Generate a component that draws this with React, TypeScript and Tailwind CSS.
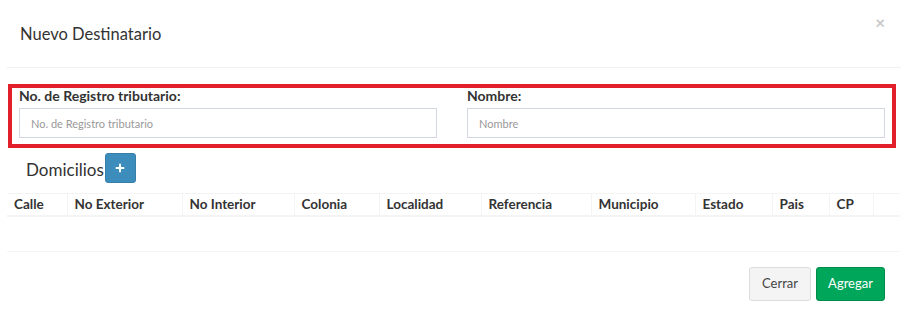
import { Plus } from "lucide-react"

const columns = [
  { label: "Calle", w: "w-[60px]" },
  { label: "No Exterior", w: "w-[115px]" },
  { label: "No Interior", w: "w-[112px]" },
  { label: "Colonia", w: "w-[85px]" },
  { label: "Localidad", w: "w-[102px]" },
  { label: "Referencia", w: "w-[110px]" },
  { label: "Municipio", w: "w-[104px]" },
  { label: "Estado", w: "w-[77px]" },
  { label: "Pais", w: "w-[57px]" },
  { label: "CP", w: "w-[44px]" },
  { label: "", w: "w-[27px]" },
]

export default function App() {
  return (
    <div className="w-[908px] h-[316px] bg-white font-['Lato',sans-serif] text-[#333]">
      <div className="relative flex items-center h-[68px] mx-[7px] px-[13px] border-b border-[#f0f0f0]">
        <h4 className="text-[16.5px] leading-none pt-[1px]">Nuevo Destinatario</h4>
        <button className="absolute right-[16px] top-[14px] text-[#c8c8c8] text-[17px] font-bold leading-none">×</button>
      </div>

      <div className="mt-[16px] ml-[8px] w-[888px] h-[64px] border-4 border-[#e2202c] grid grid-cols-2 gap-[30px] pl-[7px] pr-[7px] pt-[1px]">
        <div className="flex flex-col">
          <label className="text-[14px] font-bold leading-[14px] mb-[5px]">No. de Registro tributario:</label>
          <input
            placeholder="No. de Registro tributario"
            className="h-[30px] w-[418px] border border-[#d2d6de] px-[11px] text-[11px] placeholder:text-[#999] outline-none"
          />
        </div>
        <div className="flex flex-col">
          <label className="text-[14px] font-bold leading-[14px] mb-[5px]">Nombre:</label>
          <input
            placeholder="Nombre"
            className="h-[30px] w-[418px] border border-[#d2d6de] px-[11px] text-[11px] placeholder:text-[#999] outline-none"
          />
        </div>
      </div>

      <div className="flex items-center mt-[5px] ml-[26px] h-[30px]">
        <span className="text-[17px] leading-none pt-[3px]">Domicilios</span>
        <button className="ml-[1px] w-[31px] h-[30px] bg-[#3c8dbc] border border-[#367fa9] rounded-[3px] flex items-center justify-center text-white">
          <Plus size={12} strokeWidth={4} />
        </button>
      </div>

      <table className="table-fixed mt-[10px] ml-[7px] w-[893px] border-collapse text-[13.5px]">
        <thead>
          <tr className="border-t border-[#f4f4f4] border-b-2 border-b-[#f4f4f4] h-[22px]">
            {columns.map((c, i) => (
              <th key={i} className={`${c.w} text-left font-bold pl-[7px] border-r border-[#f4f4f4] last:border-r-0`}>
                {c.label}
              </th>
            ))}
          </tr>
        </thead>
        <tbody>
          <tr className="h-[36px] border-b border-[#f4f4f4]">
            <td colSpan={11}></td>
          </tr>
        </tbody>
      </table>

      <div className="flex justify-end gap-[5px] mt-[15px] mr-[23px]">
        <button className="w-[62px] h-[34px] bg-[#f4f4f4] border border-[#ddd] rounded-[3px] text-[13px] text-[#444]">Cerrar</button>
        <button className="w-[69px] h-[34px] bg-[#00a65a] border border-[#008d4c] rounded-[3px] text-[13px] text-white">Agregar</button>
      </div>
    </div>
  )
}
